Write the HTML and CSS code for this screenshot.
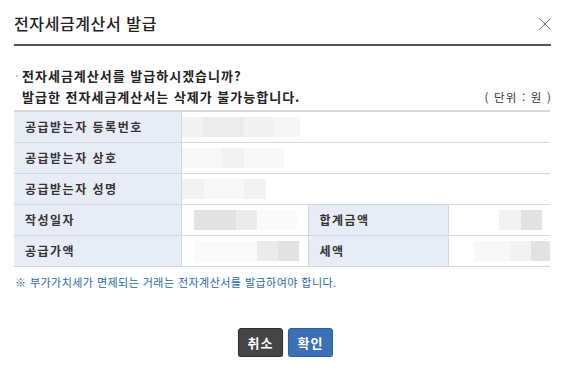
FILE: index.html
```html
<!DOCTYPE html>
<html lang="ko">
<head>
<meta charset="utf-8">
<title>전자세금계산서 발급</title>
<link rel="stylesheet" href="styles.css">
</head>
<body>
<div class="dialog">
  <header class="dlg-head">
    <h1 class="dlg-title">전자세금계산서 발급</h1>
    <button class="close" aria-label="닫기">
      <svg width="12" height="12" viewBox="0 0 12 12"><path d="M0.5 0.5L11.5 11.5M11.5 0.5L0.5 11.5" stroke="#777" stroke-width="1" fill="none"/></svg>
    </button>
  </header>

  <div class="msg">
    <p class="q"><span class="dot">·</span>전자세금계산서를 발급하시겠습니까?</p>
    <div class="msg-row">
      <p class="q2">발급한 전자세금계산서는 삭제가 불가능합니다.</p>
      <span class="unit">( 단위 : 원 )</span>
    </div>
  </div>

  <table class="info">
    <colgroup>
      <col class="c1"><col class="c2"><col class="c3"><col class="c4">
    </colgroup>
    <tbody>
      <tr>
        <th>공급받는자 등록번호</th>
        <td colspan="3"><div class="blur b1"><i class="s a"></i><i class="s b"></i><i class="s c"></i><i class="s d"></i></div></td>
      </tr>
      <tr>
        <th>공급받는자 상호</th>
        <td colspan="3"><div class="blur b2"><i class="s e"></i><i class="s f"></i><i class="s e"></i></div></td>
      </tr>
      <tr>
        <th>공급받는자 성명</th>
        <td colspan="3"><div class="blur b3"><i class="s f"></i><i class="s e"></i><i class="s f"></i></div></td>
      </tr>
      <tr>
        <th>작성일자</th>
        <td><div class="blur b4"><i class="s g"></i><i class="s h"></i><i class="s w"></i></div></td>
        <th class="mid">합계금액</th>
        <td><div class="blur b6"><i class="s f"></i><i class="s g"></i></div></td>
      </tr>
      <tr>
        <th>공급가액</th>
        <td><div class="blur b5"><i class="s w"></i><i class="s h"></i><i class="s g"></i></div></td>
        <th class="mid">세액</th>
        <td><div class="blur b7"><i class="s e"></i><i class="s f"></i><i class="s g"></i></div></td>
      </tr>
    </tbody>
  </table>

  <p class="note">※ 부가가치세가 면제되는 거래는 전자계산서를 발급하여야 합니다.</p>

  <div class="btns">
    <button class="btn dark">취소</button>
    <button class="btn blue">확인</button>
  </div>
</div>
</body>
</html>
```

FILE: styles.css
```css
* { box-sizing: border-box; }
html, body { margin: 0; padding: 0; background: #fff; }
body {
  font-family: "Noto Sans CJK KR", "Noto Sans", sans-serif;
  color: #222;
}
.dialog {
  width: 563px;
  padding: 0 12px 0 14px;
}
.dlg-head {
  display: flex;
  align-items: center;
  justify-content: space-between;
  padding-top: 11px;
  height: 46px;
  border-bottom: 2px solid #555;
  padding-bottom: 10px;
}
.dlg-title {
  margin: 0;
  font-size: 16px;
  font-weight: 500;
  line-height: 22px;
  color: #222;
  letter-spacing: 0.6px;
}
.close {
  border: 0;
  background: none;
  padding: 0;
  width: 12px;
  height: 12px;
  margin-top: 2px;
  display: flex;
}
.msg {
  margin-top: 19px;
  padding-left: 1px;
}
.q, .q2 {
  margin: 0;
  font-size: 13px;
  font-weight: 700;
  line-height: 21px;
  color: #222;
  letter-spacing: 1px;
}
.q { padding-left: 7px; }
.dot {
  color: #aaa;
  font-weight: 400;
  margin-left: -7px;
  display: inline-block;
  width: 7px;
  letter-spacing: 0;
}
.msg-row {
  display: flex;
  align-items: center;
  justify-content: space-between;
  padding-left: 7px;
}
.unit {
  font-size: 11.5px;
  color: #333;
  letter-spacing: 1.2px;
  margin-right: -1px;
}
.info {
  margin-top: 3px;
  width: 536px;
  border-collapse: collapse;
  table-layout: fixed;
  border-top: 2px solid #d6d8dc;
}
.c1 { width: 167px; }
.c2 { width: 127px; }
.c3 { width: 140px; }
.c4 { width: 102px; }
.info th, .info td {
  height: 31px;
  border-bottom: 1px solid #d3d8e1;
  padding: 0;
}
.info th {
  background: #e8ecf6;
  text-align: left;
  padding-left: 11px;
  font-size: 12px;
  font-weight: 700;
  color: #333;
  letter-spacing: 1.5px;
  border-right: 1px solid #d3d8e1;
}
.info th.mid { border-left: 1px solid #d3d8e1; }
.info td { background: #fff; }

.blur { display: flex; height: 20px; }
.s { display: block; height: 100%; }
.s.a { width: 20px; background: #f3f3f3; }
.s.b { width: 42px; background: #ececec; }
.s.c { width: 30px; background: #f1f1f1; }
.s.d { width: 26px; background: #f6f6f6; }
.s.e { width: 40px; background: #f8f8f8; }
.s.f { width: 22px; background: #f2f2f2; }
.s.g { width: 21px; background: #e2e2e2; }
.s.h { width: 21px; background: #ebebeb; }
.s.w { width: 40px; background: #fafafa; }
.b4 { margin-left: 12px; }
.b4 .g { width: 42px; }
.b5 { margin-left: 12px; }
.b5 .w { width: 63px; }
.b6 { margin-left: 50px; }
.b7 { margin-left: 25px; }

.note {
  margin: 7px 0 0 1px;
  font-size: 11px;
  line-height: 16px;
  color: #2a6aa8;
  letter-spacing: 0.45px;
}
.btns {
  display: flex;
  justify-content: center;
  gap: 5px;
  margin-top: 38px;
  padding-left: 6px;
}
.btn {
  height: 29px;
  width: 45px;
  padding: 0;
  border-radius: 3px;
  font-family: "Noto Sans CJK KR", sans-serif;
  font-size: 13px;
  font-weight: 700;
  color: #fff;
  letter-spacing: 1px;
  cursor: pointer;
}
.btn.dark {
  background: #454545;
  border: 1px solid #2e2e2e;
  box-shadow: 0 1px 1px rgba(0,0,0,0.35);
}
.btn.blue {
  background: #3b70b6;
  border: 1px solid #2f5f9e;
  box-shadow: 0 1px 1px rgba(0,0,0,0.25);
}
```
